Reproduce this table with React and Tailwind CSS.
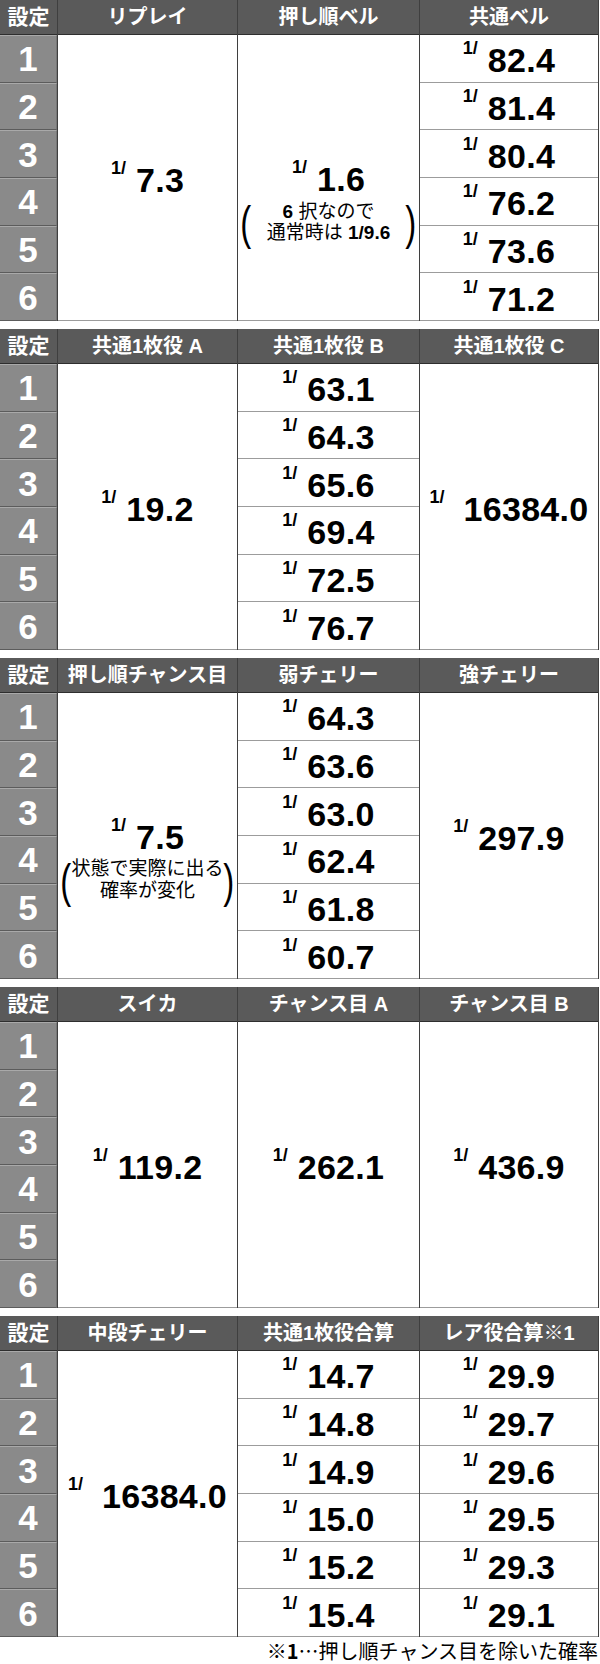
import React from 'react';

const tables = [
  {
    heads: ['リプレイ', '押し順ベル', '共通ベル'],
    cols: [
      { merged: '7.3' },
      { merged: '1.6', note: 'bell' },
      { rows: ['82.4', '81.4', '80.4', '76.2', '73.6', '71.2'] },
    ],
  },
  {
    heads: ['共通1枚役 A', '共通1枚役 B', '共通1枚役 C'],
    cols: [
      { merged: '19.2' },
      { rows: ['63.1', '64.3', '65.6', '69.4', '72.5', '76.7'] },
      { merged: '16384.0', wide: true },
    ],
  },
  {
    heads: ['押し順チャンス目', '弱チェリー', '強チェリー'],
    cols: [
      { merged: '7.5', note: 'chance' },
      { rows: ['64.3', '63.6', '63.0', '62.4', '61.8', '60.7'] },
      { merged: '297.9' },
    ],
  },
  {
    heads: ['スイカ', 'チャンス目 A', 'チャンス目 B'],
    cols: [
      { merged: '119.2' },
      { merged: '262.1' },
      { merged: '436.9' },
    ],
  },
  {
    heads: ['中段チェリー', '共通1枚役合算', 'レア役合算※1'],
    cols: [
      { merged: '16384.0', wide: true },
      { rows: ['14.7', '14.8', '14.9', '15.0', '15.2', '15.4'] },
      { rows: ['29.9', '29.7', '29.6', '29.5', '29.3', '29.1'] },
    ],
  },
];

const widths = ['w-[180px]', 'w-[182px]', 'w-[180px]'];

const Val = ({ v, wide }) => (
  <div className="flex items-start text-black">
    <span className="text-[18px] font-bold leading-none mt-[-4px]">1/</span>
    <span className={`text-[34px] font-bold leading-none tracking-[0.3px] ${wide ? 'ml-[19px]' : 'ml-[10px]'}`}>{v}</span>
  </div>
);

const Paren = ({ children }) => (
  <span className="w-[8px] inline-flex justify-center text-[47px] leading-none font-normal text-black">
    <span className="inline-block scale-x-[0.7]">{children}</span>
  </span>
);

const Note = ({ type }) => (
  <div className="w-full flex items-center justify-between px-[4px] mt-[3px]">
    <Paren>(</Paren>
    {type === 'bell' ? (
      <div className="flex flex-col items-center text-[19px] leading-[21px] text-black whitespace-nowrap">
        <div><span className="font-bold">6</span> 択なので</div>
        <div>通常時は <span className="font-bold">1/9.6</span></div>
      </div>
    ) : (
      <div className="flex flex-col items-center text-[19px] leading-[22px] text-black whitespace-nowrap">
        <div>状態で実際に出る</div>
        <div>確率が変化</div>
      </div>
    )}
    <Paren>)</Paren>
  </div>
);

const Table = ({ heads, cols }) => (
  <div className="flex w-[599px] h-[321px]">
    {/* 設定 column */}
    <div className="w-[57px] flex flex-col">
      <div className="h-[35px] bg-[#5a5a5a] border-b border-[#2e2e2e] flex items-center justify-center text-white text-[21px] font-bold">
        設定
      </div>
      <div className="flex-1 flex flex-col">
        {[1, 2, 3, 4, 5, 6].map((n) => (
          <div
            key={n}
            className="flex-1 bg-[#8a8a8a] border-t border-t-[#a9a9a9] border-b border-b-[#5c5c5c] border-r border-r-[#777] flex items-center justify-center text-white text-[35px] font-bold leading-none"
          >
            {n}
          </div>
        ))}
      </div>
    </div>

    {cols.map((c, i) => (
      <div key={i} className={`${widths[i]} flex flex-col border-l border-[#3f3f3f] ${i === 2 ? 'border-r' : ''}`}>
        <div className="h-[35px] bg-[#5a5a5a] border-b border-[#2e2e2e] flex items-center justify-center text-white text-[20px] font-bold">
          {heads[i]}
        </div>
        {c.rows ? (
          <div className="flex-1 flex flex-col">
            {c.rows.map((r) => (
              <div key={r} className="flex-1 border-b border-[#9c9c9c] flex items-center justify-center pt-[4px] bg-white">
                <Val v={r} />
              </div>
            ))}
          </div>
        ) : (
          <div className={`flex-1 border-b border-[#9c9c9c] flex flex-col items-center justify-center bg-white ${c.note ? 'pt-[52px]' : 'pt-[4px]'}`}>
            <Val v={c.merged} wide={c.wide} />
            {c.note && <Note type={c.note} />}
          </div>
        )}
      </div>
    ))}
  </div>
);

export default function App() {
  return (
    <div className="w-[600px] h-[1664px] bg-white font-['Liberation_Sans','Noto_Sans_CJK_JP',sans-serif]">
      <div className="flex flex-col gap-[8px]">
        {tables.map((t, i) => (
          <Table key={i} heads={t.heads} cols={t.cols} />
        ))}
      </div>
      <div className="h-[27px] flex items-center justify-end pr-[2px] text-[20px] text-black font-['Noto_Sans_CJK_JP',sans-serif]">
        <span className="font-bold">※1</span>…押し順チャンス目を除いた確率
      </div>
    </div>
  );
}
